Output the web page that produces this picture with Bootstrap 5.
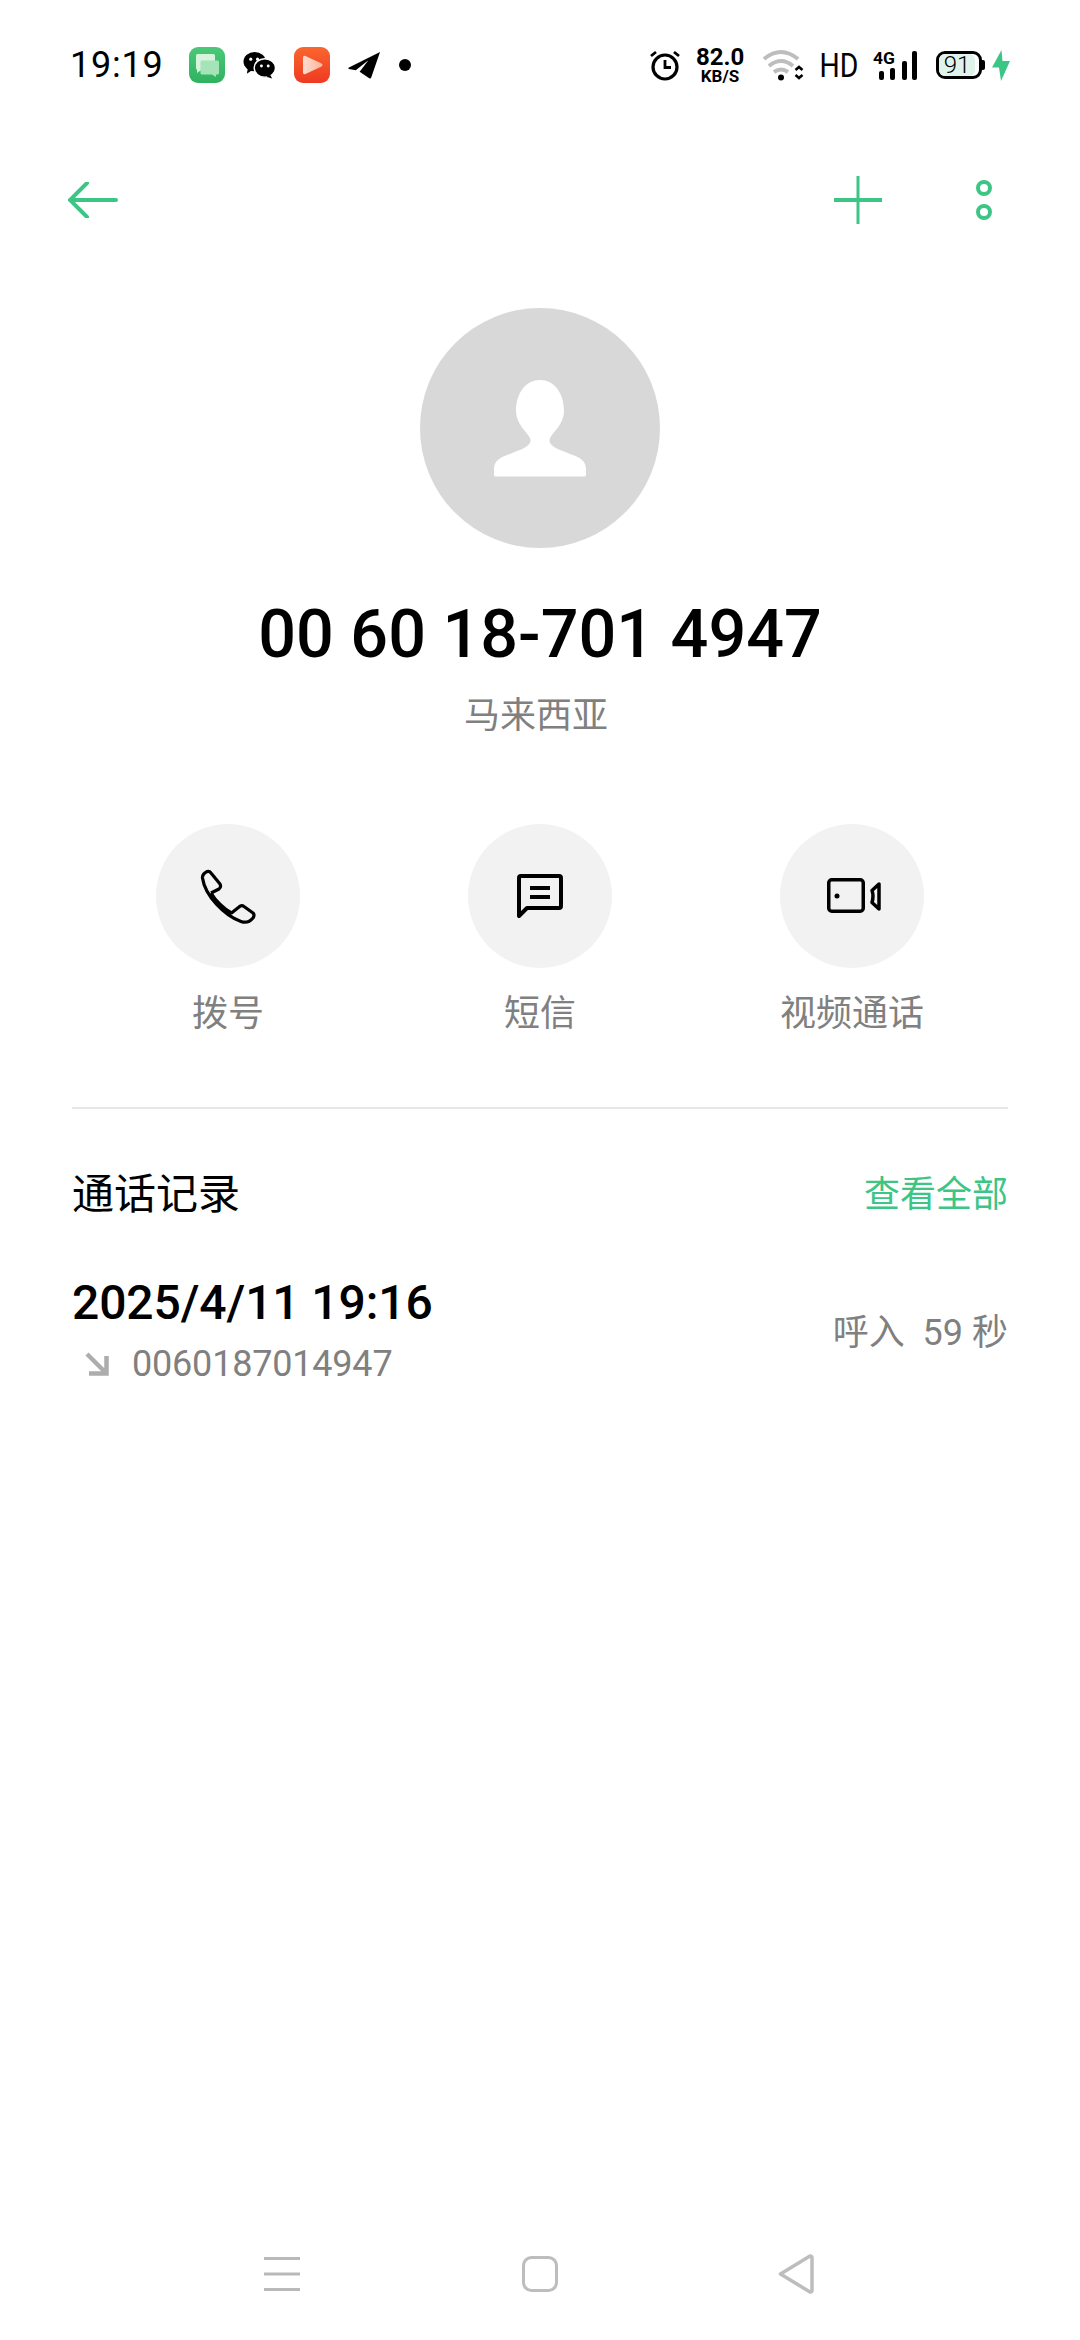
<!DOCTYPE html>
<html lang="zh-CN">
<head>
    <meta charset="UTF-8">
    <meta name="viewport" content="width=device-width, initial-scale=1.0">
    <title>00 60 18-701 4947</title>
    <link rel="stylesheet" href="https://cdn.jsdelivr.net/npm/bootstrap@5.3.0/dist/css/bootstrap.min.css">
    <script src="https://cdn.jsdelivr.net/npm/bootstrap@5.3.0/dist/js/bootstrap.bundle.min.js"></script>
    <style>
        body {
            margin: 0;
            background: #fff;
            font-family: Roboto, "Noto Sans CJK SC", sans-serif;
            color: #000;
        }
        svg { display: block; flex-shrink: 0; }
        .phone-screen { width: 1080px; height: 2340px; overflow: hidden; }
        .status-row { height: 130px; padding: 0 70px; }
        .status-time { font-size: 36px; letter-spacing: .8px; width: 92px; line-height: 1; }
        .left-gap-lg { margin-left: 27px; }
        .left-gap { margin-left: 18px; }
        .status-speed { width: 48px; margin-left: 15px; font-weight: 700; text-align: center; }
        .speed-num { font-size: 24px; line-height: 20px; }
        .speed-unit { font-size: 17px; line-height: 14px; margin-top: 2px; }
        .wifi-icon { margin-left: 19px; }
        .status-hd { font-size: 33px; line-height: 1; transform: scaleX(.86); width: 36px; margin-left: 12px; margin-right: 2px; text-align: center; }
        .batt-wrap { margin-left: 19px; }
        .batt-shell { width: 46px; height: 28px; border: 3px solid #000; border-radius: 9px; }
        .batt-level { width: 36px; height: 100%; background: #dff3ea; border-radius: 6px; font-size: 24px; font-weight: 300; line-height: 22px; text-align: center; }
        .batt-tip { width: 3px; height: 10px; background: #000; border-radius: 0 2px 2px 0; }
        .bolt-icon { margin-left: 7px; }
        .tool-row { height: 140px; padding: 0 88px 0 68px; }
        .dots-icon { margin-left: 93px; }
        .avatar-disc { width: 240px; height: 240px; margin-top: 38px; background: #d8d8d8; }
        .contact-num { font-size: 66.5px; font-weight: 500; line-height: 74px; margin-top: 49px; }
        .contact-area { font-size: 36px; line-height: 50px; margin-top: 20px; padding-right: 8px; color: #808080; }
        .action-wrap { padding: 0 72px; margin-top: 83px; }
        .action-disc { width: 144px; height: 144px; background: #f2f2f2; }
        .action-label { font-size: 36px; line-height: 50px; margin-top: 21px; color: #808080; }
        .split-line { margin: 68px 72px 0; height: 2px; background: #e6e6e6; }
        .log-wrap { padding: 0 72px; }
        .log-title { font-size: 42px; line-height: 60px; margin-top: 56px; }
        .log-all { font-size: 36px; line-height: 60px; margin-top: 56px; color: #3cc585; }
        .log-time { font-size: 48px; font-weight: 500; line-height: 60px; margin-top: 48px; letter-spacing: -.1px; }
        .log-number { font-size: 36px; line-height: 46px; margin-top: 8px; color: #808080; letter-spacing: -.2px; }
        .log-arrow { margin-left: 13px; margin-right: 23px; }
        .log-result { font-size: 36px; line-height: 50px; margin-top: 83px; color: #808080; }
        .nav-row { height: 68px; margin-bottom: 32px; padding-left: 264px; }
        .nav-home { margin-left: 222px; }
        .nav-back { margin-left: 220px; }
    </style>
</head>
<body>
<div class="phone-screen d-flex flex-column">

    <!-- status bar -->
    <div class="status-row d-flex align-items-center justify-content-between">
        <div class="d-flex align-items-center">
            <span class="status-time">19:19</span>
            <svg class="left-gap-lg" width="36" height="36" viewBox="0 0 36 36">
                <defs><linearGradient id="msgGreen" x1="0" y1="0" x2="0" y2="1"><stop offset="0" stop-color="#4cc878"/><stop offset="1" stop-color="#2fb25f"/></linearGradient></defs>
                <rect width="36" height="36" rx="9" fill="url(#msgGreen)"/>
                <path d="M7 8.500q0-1.500 1.500-1.500h16q1.500 0 1.500 1.500V21q0 1.500-1.500 1.500H13L8 26v-3.500q-1 0-1-1.500z" fill="#d6f3dd"/>
                <path d="M13 13.500h15.500q1.500 0 1.500 1.500v11q0 1.500-1.500 1.500H27v2.500l-4-2.500H13q-1.500 0-1.500-1.500V15q0-1.500 1.500-1.500z" fill="#a5e3b8"/>
            </svg>
            <svg class="left-gap" width="33" height="28" viewBox="0 0 34 28">
                <ellipse cx="12" cy="10.500" rx="11.500" ry="10" fill="#000"/>
                <path d="M5 17l-1 6 6-4z" fill="#000"/>
                <ellipse cx="22.500" cy="17" rx="11" ry="9.500" fill="#000" stroke="#fff" stroke-width="1.500"/>
                <path d="M28 24l2 4-6-2z" fill="#000"/>
                <circle cx="8" cy="8" r="1.600" fill="#fff"/><circle cx="15" cy="8" r="1.600" fill="#fff"/>
                <circle cx="19" cy="15" r="1.500" fill="#fff"/><circle cx="26" cy="15" r="1.500" fill="#fff"/>
            </svg>
            <svg class="left-gap" width="36" height="36" viewBox="0 0 36 36">
                <defs>
                    <linearGradient id="playRed" x1="0" y1="0" x2="0" y2="1"><stop offset="0" stop-color="#f9662f"/><stop offset="1" stop-color="#ee3a22"/></linearGradient>
                    <linearGradient id="playTri" x1="0" y1="0" x2="1" y2="0"><stop offset="0" stop-color="#fcdcd0"/><stop offset="1" stop-color="#fbb49c"/></linearGradient>
                </defs>
                <rect width="36" height="36" rx="9" fill="url(#playRed)"/>
                <path d="M9 10.500q0-2.500 2.500-1.500l16 7.500q2 1.500 0 3L11.500 27q-2.500 1-2.500-1.500z" fill="url(#playTri)"/>
            </svg>
            <svg class="left-gap" width="33" height="28" viewBox="0 0 34 28">
                <path d="M33 0.500L1 16.500q-1.500 1 0 1.500l7 1.500L21 9 12 21l9.500 6.500q2 1 2.500-1z" fill="#000"/>
            </svg>
            <svg class="left-gap" width="12" height="12" viewBox="0 0 12 12"><circle cx="6" cy="6" r="6" fill="#000"/></svg>
        </div>
        <div class="d-flex align-items-center">
            <svg width="32" height="32" viewBox="0 0 32 32" fill="none" stroke="#000" stroke-width="3.200">
                <circle cx="16" cy="18" r="12"/>
                <path d="M16 11v7.500h6" stroke-width="2.800"/>
                <path d="M2 7l5-4M30 7l-5-4" stroke-width="2.800"/>
            </svg>
            <div class="status-speed"><div class="speed-num">82.0</div><div class="speed-unit">KB/S</div></div>
            <svg class="wifi-icon" width="42" height="32" viewBox="0 0 42 32" fill="none" stroke="#bdbdbd" stroke-width="4">
                <path d="M1 10Q18 -4 35 10"/>
                <path d="M6 17Q18 7 30 17"/>
                <path d="M11 23Q18 18 25 23" />
                <circle cx="18" cy="28.500" r="3" fill="#000" stroke="none"/>
                <path d="M32.500 21l3.500-3 3.500 3M32.500 26l3.500 3 3.500-3" stroke="#000" stroke-width="2.500"/>
            </svg>
            <span class="status-hd">HD</span>
            <svg class="left-gap" width="44" height="34" viewBox="0 0 44 34">
                <text x="0" y="16" font-family="Roboto, sans-serif" font-size="17" font-weight="700" textLength="22" lengthAdjust="spacingAndGlyphs">4G</text>
                <rect x="6" y="23" width="5" height="9" rx="2" fill="#000"/>
                <rect x="17" y="20" width="5" height="12" rx="2" fill="#000"/>
                <rect x="29" y="13" width="5" height="19" rx="2" fill="#000"/>
                <rect x="39" y="3" width="5" height="29" rx="2" fill="#000"/>
            </svg>
            <div class="batt-wrap d-flex align-items-center">
                <div class="batt-shell"><div class="batt-level">91</div></div>
                <div class="batt-tip"></div>
            </div>
            <svg class="bolt-icon" width="18" height="31" viewBox="0 0 18 31"><path d="M9.500 0L0 17.500h7L9 31 18 11h-7.500z" fill="#3cc585"/></svg>
        </div>
    </div>

    <!-- toolbar -->
    <div class="tool-row d-flex align-items-center justify-content-between">
        <svg width="50" height="36" viewBox="0 0 50 36" fill="none" stroke="#3cc585" stroke-width="4" stroke-linecap="round">
            <path d="M48 18H2M19 1L2 18l17 17"/>
        </svg>
        <div class="d-flex align-items-center">
            <svg width="50" height="50" viewBox="0 0 50 50" stroke="#3cc585">
                <path d="M25 1v48" stroke-width="3"/>
                <path d="M1 25h48" stroke-width="4"/>
            </svg>
            <svg class="dots-icon" width="16" height="40" viewBox="0 0 16 40" fill="none" stroke="#3cc585" stroke-width="4">
                <circle cx="8" cy="8" r="6"/>
                <circle cx="8" cy="32" r="6"/>
            </svg>
        </div>
    </div>

    <!-- contact -->
    <div class="d-flex flex-column align-items-center">
        <div class="avatar-disc rounded-circle">
            <svg width="240" height="240" viewBox="0 0 240 240">
                <path d="M120 72C134 72 144 85 144 103C144 116 133 124 130 130C127 138 138 141 150 146C160 149 166 153 166 161V167Q166 168.500 164 168.500H76Q74 168.500 74 167V161C74 153 80 149 90 146C102 141 113 138 110 130C107 124 96 116 96 103C96 85 106 72 120 72Z" fill="#fff"/>
            </svg>
        </div>
        <div class="contact-num">00 60 18-701 4947</div>
        <div class="contact-area">马来西亚</div>
    </div>

    <!-- actions -->
    <div class="action-wrap">
        <div class="row g-0 text-center">
            <div class="col-4 d-flex flex-column align-items-center">
                <div class="action-disc rounded-circle d-flex align-items-center justify-content-center">
                    <svg width="60" height="60" viewBox="0 0 60 60" fill="none" stroke="#000" stroke-width="3.200" stroke-linejoin="round">
                        <path d="M4.500 12C4 8 10 3 13 7L22 18Q23.500 21 21 23L13 27M4.500 12C7 30 27 50 43 55.500Q50 58 55 52Q57 49 55 47L46 40.500Q43.500 38.500 41 41L33.500 47C26 43 17 34 13 27"/>
                    </svg>
                </div>
                <div class="action-label">拨号</div>
            </div>
            <div class="col-4 d-flex flex-column align-items-center">
                <div class="action-disc rounded-circle d-flex align-items-center justify-content-center">
                    <svg width="60" height="60" viewBox="0 0 60 60" fill="none" stroke="#000" stroke-width="4">
                        <path d="M9 50V12q0-2 2-2h38q2 0 2 2v28q0 2-2 2H17z" stroke-linejoin="round"/>
                        <path d="M20 22h20M20 31h20"/>
                    </svg>
                </div>
                <div class="action-label">短信</div>
            </div>
            <div class="col-4 d-flex flex-column align-items-center">
                <div class="action-disc rounded-circle d-flex align-items-center justify-content-center">
                    <svg width="60" height="60" viewBox="0 0 60 60" fill="none" stroke="#000" stroke-width="3.500">
                        <rect x="6.750" y="13.750" width="34.500" height="31.500" rx="3"/>
                        <circle cx="15" cy="30" r="2.500" fill="#000" stroke="none"/>
                        <path d="M57 18V43L50 36.500Q52 30 50 24.500z" stroke-linejoin="round"/>
                    </svg>
                </div>
                <div class="action-label">视频通话</div>
            </div>
        </div>
    </div>

    <div class="split-line"></div>

    <!-- call log -->
    <div class="log-wrap">
        <div class="d-flex justify-content-between">
            <div class="log-title">通话记录</div>
            <div class="log-all">查看全部</div>
        </div>
        <div class="d-flex justify-content-between">
            <div>
                <div class="log-time">2025/4/11 19:16</div>
                <div class="log-number d-flex align-items-center">
                    <svg class="log-arrow" width="24" height="24" viewBox="0 0 24 24" fill="none" stroke="#adadad" stroke-width="4.500">
                        <path d="M2 2L21 21M21.500 4V21.500H4"/>
                    </svg>
                    <span>0060187014947</span>
                </div>
            </div>
            <div class="log-result">呼入&nbsp; 59 秒</div>
        </div>
    </div>

    <!-- nav bar -->
    <div class="nav-row mt-auto d-flex align-items-center">
        <svg width="36" height="34" viewBox="0 0 36 34" fill="#b9b9b9">
            <rect y="0" width="36" height="3"/><rect y="15.500" width="36" height="3"/><rect y="31" width="36" height="3"/>
        </svg>
        <svg class="nav-home" width="36" height="36" viewBox="0 0 36 36" fill="none" stroke="#bdbdbd" stroke-width="3">
            <rect x="1.500" y="1.500" width="33" height="33" rx="8"/>
        </svg>
        <svg class="nav-back" width="36" height="40" viewBox="0 0 36 40" fill="none" stroke="#bdbdbd" stroke-width="3.500" stroke-linejoin="round">
            <path d="M32 2L2.500 20 32 38q2 0 2-2V4q0-2-2-2z"/>
        </svg>
    </div>
</div>
</body>
</html>
